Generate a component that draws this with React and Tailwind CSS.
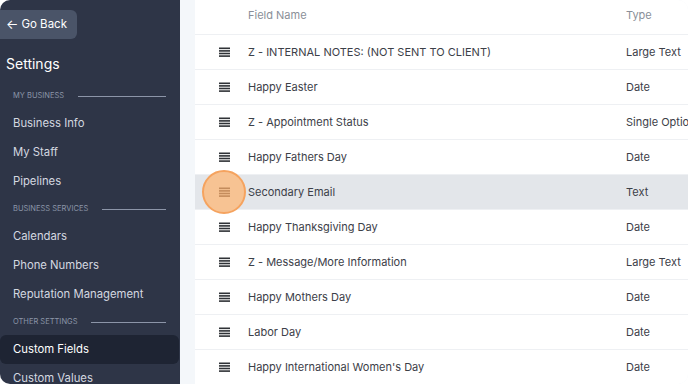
import React from "react";

const sections = [
  { label: "MY BUSINESS", items: ["Business Info", "My Staff", "Pipelines"] },
  { label: "BUSINESS SERVICES", items: ["Calendars", "Phone Numbers", "Reputation Management"] },
  { label: "OTHER SETTINGS", items: ["Custom Fields", "Custom Values"] },
];

const fields = [
  { name: "Z - INTERNAL NOTES: (NOT SENT TO CLIENT)", type: "Large Text" },
  { name: "Happy Easter", type: "Date" },
  { name: "Z - Appointment Status", type: "Single Option" },
  { name: "Happy Fathers Day", type: "Date" },
  { name: "Secondary Email", type: "Text", active: true },
  { name: "Happy Thanksgiving Day", type: "Date" },
  { name: "Z - Message/More Information", type: "Large Text" },
  { name: "Happy Mothers Day", type: "Date" },
  { name: "Labor Day", type: "Date" },
  { name: "Happy International Women's Day", type: "Date" },
];

function DragIcon({ className }) {
  return (
    <svg width="11" height="10" viewBox="0 0 11 10" className={className}>
      <rect x="0" y="0.5" width="11" height="1.6" fill="currentColor" />
      <rect x="0" y="3.1" width="11" height="1.6" fill="currentColor" />
      <rect x="0" y="5.7" width="11" height="1.6" fill="currentColor" />
      <rect x="0" y="8.3" width="11" height="1.6" fill="currentColor" />
    </svg>
  );
}

export default function App() {
  return (
    <div className="w-[688px] h-[384px] bg-white" style={{ fontFamily: "Inter, 'Noto Sans', sans-serif" }}>
      <div className="flex h-full w-full overflow-hidden rounded-[10px]">
        {/* sidebar */}
        <aside className="w-[180px] shrink-0 bg-[#2e3547] pt-[10px]">
          <button className="flex h-[29px] w-[77px] items-center gap-[3px] rounded-r-md bg-[#4a5468] pl-[6px] text-[11.5px] text-white">
            <span className="text-[13px] leading-none">←</span>
            <span>Go Back</span>
          </button>
          <h2 className="mt-[15px] pl-[6px] text-[14px] leading-[20px] text-white">Settings</h2>
          <nav className="mt-[9px]">
            {sections.map((s) => (
              <div key={s.label}>
                <div className="flex h-[26px] items-center gap-[14px] pl-[13px] pr-[14px]">
                  <span className="text-[7.5px] text-[#8c95a8]">{s.label}</span>
                  <span className="h-px flex-1 bg-[#8c95a8]" />
                </div>
                {s.items.map((item) => (
                  <div
                    key={item}
                    className={`flex h-[29px] items-center pl-[13px] text-[11.3px] ${
                      item === "Custom Fields"
                        ? "mr-[1px] rounded-md bg-[#1e2433] text-white"
                        : "text-[#d4d8e0]"
                    }`}
                  >
                    {item}
                  </div>
                ))}
              </div>
            ))}
          </nav>
        </aside>

        {/* main */}
        <main className="flex-1 bg-[#f4f7fa] pl-[15px]">
          <div className="h-full bg-white">
            <div className="flex h-[35px] items-center border-b border-[#eef0f3] pb-[4px] text-[11px] text-[#8a8f98]">
              <span className="w-[53px] shrink-0" />
              <span className="flex-1">Field Name</span>
              <span className="w-[62px] shrink-0">Type</span>
            </div>
            {fields.map((f) => (
              <div
                key={f.name}
                className={`relative flex h-[35px] items-center border-b border-[#eef0f3] text-[11px] text-[#3c4048] ${
                  f.active ? "bg-[#e3e6ea]" : ""
                }`}
              >
                <span className="flex w-[53px] shrink-0 items-center pl-[24px]">
                  {f.active ? (
                    <span className="absolute left-[7px] top-[-5px] flex h-[44px] w-[44px] items-center justify-center rounded-full border-2 border-[#f5a35f] bg-[#f7c393]">
                      <DragIcon className="text-[#c48c5c]" />
                    </span>
                  ) : (
                    <DragIcon className="text-[#2f3237]" />
                  )}
                </span>
                <span className="flex-1 whitespace-nowrap">{f.name}</span>
                <span className="w-[62px] shrink-0 whitespace-nowrap">{f.type}</span>
              </div>
            ))}
          </div>
        </main>
      </div>
    </div>
  );
}
